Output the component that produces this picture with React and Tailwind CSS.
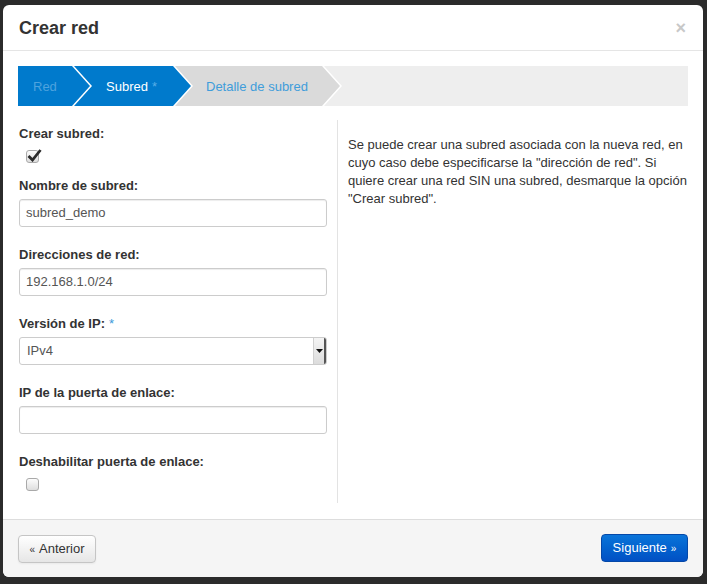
const FONT = { fontFamily: '"Liberation Sans", Arial, sans-serif' };

function Label({ children, required }) {
  return (
    <div className="h-[18px] leading-[20px] ml-[1px] text-[13px] font-bold text-[#333]">
      {children}
      {required && <span className="text-[#3a9ad9] font-normal ml-[4px]">*</span>}
    </div>
  );
}

function TextInput({ value }) {
  return (
    <div className="mt-[5px] ml-[1px] w-[308px] h-[28px] border border-[#ccc] rounded-[3px] bg-white px-[6px] flex items-center text-[13px] text-[#555] shadow-[inset_0_1px_1px_rgba(0,0,0,0.075)]">
      {value}
    </div>
  );
}

function Checkbox({ checked }) {
  return (
    <div className="relative ml-[8px] w-[13px] h-[13px] rounded-[3px] border border-[#a9a9a9] bg-gradient-to-b from-[#fcfcfc] to-[#dedede]">
      {checked && (
        <svg className="absolute left-[0px] top-[-3px]" width="15" height="14" viewBox="0 0 15 14">
          <path d="M1.5 8 L5.5 12 L13.5 2" fill="none" stroke="#2b2b2b" strokeWidth="2.8" />
        </svg>
      )}
    </div>
  );
}

function Step({ label, active, first, done, asterisk, className }) {
  return (
    <div
      className={`h-[40px] flex items-center pt-[1px] text-[13px] shrink-0 ${className}`}
      style={{
        clipPath: first
          ? 'polygon(0 0, calc(100% - 18px) 0, 100% 50%, calc(100% - 18px) 100%, 0 100%)'
          : 'polygon(0 0, calc(100% - 18px) 0, 100% 50%, calc(100% - 18px) 100%, 0 100%, 18px 50%)',
      }}
    >
      <span className={active ? 'text-white' : done ? 'text-[#4ea3de]' : 'text-[#3f9ddb]'}>{label}</span>
      {asterisk && <span className="ml-[4px] text-[#5aaee6]">*</span>}
    </div>
  );
}

export default function App() {
  return (
    <div className="w-[707px] h-[584px] bg-[#2b2b2b] pt-[5px] pl-[3px]" style={FONT}>
      <div className="w-[700px] h-[572px] bg-white rounded-[6px] flex flex-col overflow-hidden">
        {/* Header */}
        <div className="h-[46px] shrink-0 border-b border-[#e5e5e5] pl-[16px] pr-[17px] flex items-center justify-between">
          <h3 className="text-[18px] font-bold text-[#333] mt-[1px]">Crear red</h3>
          <span className="text-[18px] font-bold text-[#c8c8c8] leading-none">×</span>
        </div>

        {/* Body */}
        <div className="h-[468px] shrink-0 px-[15px] pt-[15px]">
          <div className="h-[40px] flex bg-white">
            <Step label="Red" first done className="w-[72px] pl-[15px] bg-[#007acc]" />
            <Step label="Subred" active asterisk className="w-[117px] -ml-[16px] pl-[32px] bg-[#007acc]" />
            <Step label="Detalle de subred" className="w-[165px] -ml-[16px] pl-[31px] bg-[#dadada]" />
            <div
              className="flex-1 -ml-[16px] bg-[#eeeeee]"
              style={{ clipPath: 'polygon(0 0, 100% 0, 100% 100%, 0 100%, 18px 50%)' }}
            />
          </div>

          <div className="mt-[14px] flex h-[383px]">
            <div className="w-[320px] shrink-0 border-r border-[#e3e3e3] pt-[4px]">
              <Label>Crear subred:</Label>
              <div className="mt-[8px] mb-[13px]">
                <Checkbox checked />
              </div>

              <Label>Nombre de subred:</Label>
              <TextInput value="subred_demo" />

              <div className="mt-[18px]">
                <Label>Direcciones de red:</Label>
                <TextInput value="192.168.1.0/24" />
              </div>

              <div className="mt-[18px]">
                <Label required>Versión de IP:</Label>
                <div className="mt-[5px] ml-[1px] w-[308px] h-[28px] border border-[#ccc] rounded-[3px] bg-white flex items-stretch text-[13px] text-[#555] overflow-hidden">
                  <div className="flex-1 flex items-center pl-[7px]">IPv4</div>
                  <div className="w-[13px] border-l border-[#d0d0d0] border-r-2 border-r-[#555] bg-gradient-to-b from-[#f4f4f4] to-[#dcdcdc] flex items-center justify-center">
                    <svg width="7" height="4" viewBox="0 0 7 4">
                      <path d="M0 0 H7 L3.5 4 Z" fill="#111" />
                    </svg>
                  </div>
                </div>
              </div>

              <div className="mt-[18px]">
                <Label>IP de la puerta de enlace:</Label>
                <TextInput value="" />
              </div>

              <div className="mt-[18px]">
                <Label>Deshabilitar puerta de enlace:</Label>
                <div className="mt-[8px]">
                  <Checkbox />
                </div>
              </div>
            </div>

            <div className="flex-1 pl-[10px] pt-[16px]">
              <p className="w-[346px] text-[13px] leading-[18px] text-[#333]">
                Se puede crear una subred asociada con la nueva red, en cuyo caso debe especificarse la "dirección de red". Si quiere crear una red SIN una subred, desmarque la opción "Crear subred".
              </p>
            </div>
          </div>
        </div>

        {/* Footer */}
        <div className="flex-1 border-t border-[#dddddd] bg-[#f5f5f5] px-[15px] pt-[14px] flex justify-between items-start">
          <button className="mt-[1px] h-[28px] w-[78px] flex items-center justify-center rounded-[4px] border border-[#c5c5c5] bg-gradient-to-b from-white to-[#e6e6e6] text-[13px] text-[#333] shadow-[0_1px_2px_rgba(0,0,0,0.05)]">
            <span className="text-[10px] mr-[4px]">«</span>Anterior
          </button>
          <button className="h-[28px] w-[87px] flex items-center justify-center rounded-[4px] border border-[#0448a8] bg-gradient-to-b from-[#0a74d9] to-[#0250c4] text-[13px] text-white">
            Siguiente<span className="text-[10px] ml-[4px]">»</span>
          </button>
        </div>
      </div>
    </div>
  );
}
